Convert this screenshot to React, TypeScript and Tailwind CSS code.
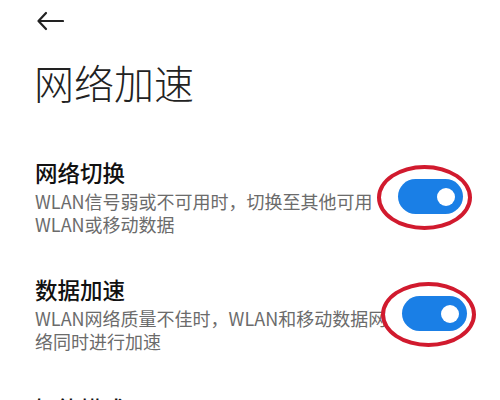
const font = { fontFamily: '"Noto Sans CJK SC", "Noto Sans", sans-serif' };

function Toggle() {
  return (
    <div className="relative shrink-0">
      <div className="flex h-[35px] w-[65px] items-center justify-end rounded-full bg-[#1a7fe6] pr-[8px]">
        <div className="h-[18px] w-[18px] rounded-full bg-white" />
      </div>
      <div className="pointer-events-none absolute -left-[21px] -top-[14px] h-[65px] w-[95px] rounded-[50%] border-[4px] border-[#d11a2e]" />
    </div>
  );
}

function Row({ title, lines }: { title: string; lines: string[] }) {
  return (
    <div className="flex items-center gap-[16px] pl-[35px] pr-[37px]">
      <div className="flex-1">
        <div className="text-[22.5px] leading-[30px] font-medium text-[#111]">{title}</div>
        <div className="mt-[3px] text-[18px] leading-[23px] text-[#6b6b6b]">
          {lines.map((l) => (
            <div key={l} className="whitespace-nowrap">
              {l}
            </div>
          ))}
        </div>
      </div>
      <Toggle />
    </div>
  );
}

export default function App() {
  return (
    <div className="h-[400px] w-[500px] overflow-hidden bg-white" style={font}>
      <div className="pl-[36px] pt-[8px]">
        <svg width="28" height="26" viewBox="0 0 28 26" fill="none" stroke="#222" strokeWidth="2.2" strokeLinecap="round" strokeLinejoin="round">
          <path d="M27 13H3" />
          <path d="M10 5 2.5 13l7.5 8" />
        </svg>
      </div>
      <h1 className="mt-[24px] pl-[34px] text-[40px] leading-[48px] font-light text-[#222]">网络加速</h1>
      <div className="mt-[51px] flex flex-col">
        <Row title="网络切换" lines={["WLAN信号弱或不可用时，切换至其他可用", "WLAN或移动数据"]} />
        <div className="mt-[38px]">
          <Row title="数据加速" lines={["WLAN网络质量不佳时，WLAN和移动数据网", "络同时进行加速"]} />
        </div>
        <div className="mt-[40px] pl-[35px] text-[22.5px] leading-[30px] font-medium text-[#111]">智能模式</div>
      </div>
    </div>
  );
}
